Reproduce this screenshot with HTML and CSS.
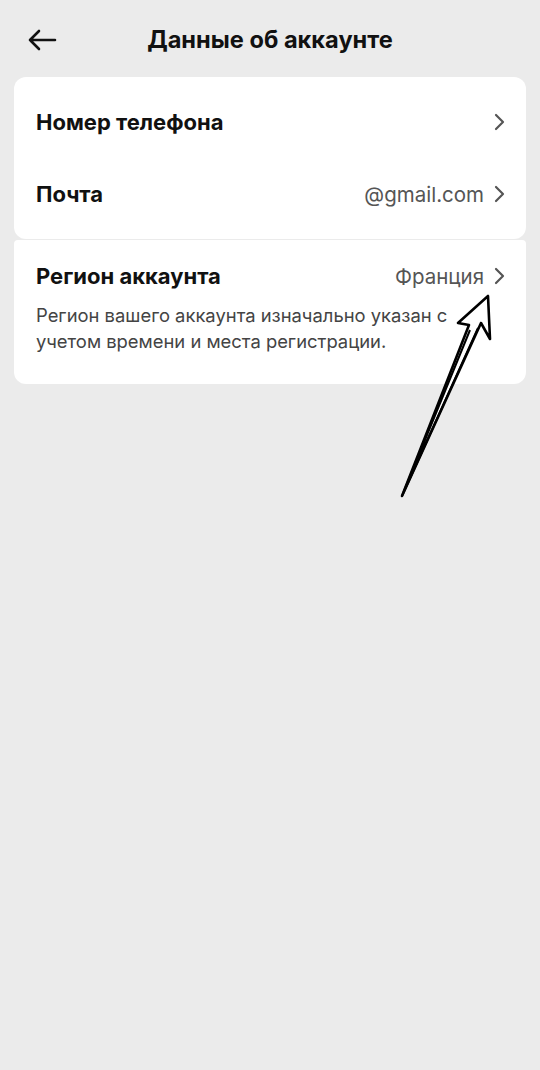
FILE: index.html
```html
<!DOCTYPE html>
<html lang="ru">
<head>
<meta charset="utf-8">
<link rel="stylesheet" href="styles.css">
</head>
<body>
<div class="page">
  <header class="topbar">
    <svg class="back" width="30" height="22" viewBox="0 0 30 22"><path d="M28 11H3M12 2L3 11L12 20" fill="none" stroke="#111" stroke-width="2.6" stroke-linecap="round" stroke-linejoin="round"/></svg>
    <h1 class="title">Данные об аккаунте</h1>
  </header>
  <section class="card card-top">
    <div class="row">
      <span class="label">Номер телефона</span>
      <span class="right"><svg class="chev" width="12" height="18" viewBox="0 0 12 18"><path d="M2 2L9 9L2 16" fill="none" stroke="#555" stroke-width="2.2" stroke-linecap="round" stroke-linejoin="round"/></svg></span>
    </div>
    <div class="row">
      <span class="label">Почта</span>
      <span class="right"><span class="value">@gmail.com</span><svg class="chev" width="12" height="18" viewBox="0 0 12 18"><path d="M2 2L9 9L2 16" fill="none" stroke="#555" stroke-width="2.2" stroke-linecap="round" stroke-linejoin="round"/></svg></span>
    </div>
  </section>
  <section class="card card-bottom">
    <div class="row row-region">
      <span class="label">Регион аккаунта</span>
      <span class="right"><span class="value">Франция</span><svg class="chev" width="12" height="18" viewBox="0 0 12 18"><path d="M2 2L9 9L2 16" fill="none" stroke="#555" stroke-width="2.2" stroke-linecap="round" stroke-linejoin="round"/></svg></span>
    </div>
    <p class="desc">Регион вашего аккаунта изначально указан с учетом времени и места регистрации.</p>
  </section>
  <svg class="annot" width="540" height="1070" viewBox="0 0 540 1070">
    <path d="M488 296 L490 339 L481 323 L402 496 L469 325 L458 323 Z" fill="#fff" stroke="#000" stroke-width="2.6" stroke-linejoin="round"/>
    <path d="M470 330 L402 496 L478 328" fill="none" stroke="#000" stroke-width="2"/>
  </svg>
</div>
</body>
</html>
```
FILE: styles.css
```css
html, body {
  margin: 0;
  padding: 0;
  background: #ebebeb;
}
body {
  font-family: Inter, "Noto Sans", "Liberation Sans", sans-serif;
  color: #111;
}
.page {
  position: relative;
  width: 540px;
  min-height: 1070px;
  padding: 0 14px;
  box-sizing: border-box;
}
.topbar {
  height: 77px;
  display: flex;
  align-items: center;
  justify-content: center;
  position: relative;
}
.back {
  position: absolute;
  left: 13px;
  top: 29px;
}
.title {
  margin: 0;
  font-size: 23.6px;
  font-weight: 700;
  letter-spacing: 0;
  padding-top: 2px;
}
.card {
  background: #fff;
  padding: 0 22px;
}
.card-top {
  border-radius: 12px;
  padding-top: 9px;
  padding-bottom: 9px;
}
.card-bottom {
  margin-top: 1px;
  border-radius: 4px 4px 12px 12px;
  padding-top: 16px;
  padding-bottom: 30px;
}
.row {
  height: 72px;
  display: flex;
  align-items: center;
  justify-content: space-between;
}
.row-region {
  height: 40px;
}
.label {
  font-size: 22px;
  font-weight: 700;
}
.right {
  display: flex;
  align-items: center;
  gap: 10px;
}
.value {
  font-size: 20.5px;
  color: #555;
}
.chev {
  margin-right: -2px;
}
.desc {
  margin: 6px 0 0;
  font-size: 18.4px;
  line-height: 26px;
  color: #444;
}
.annot {
  position: absolute;
  left: 0;
  top: 0;
  pointer-events: none;
}
```
